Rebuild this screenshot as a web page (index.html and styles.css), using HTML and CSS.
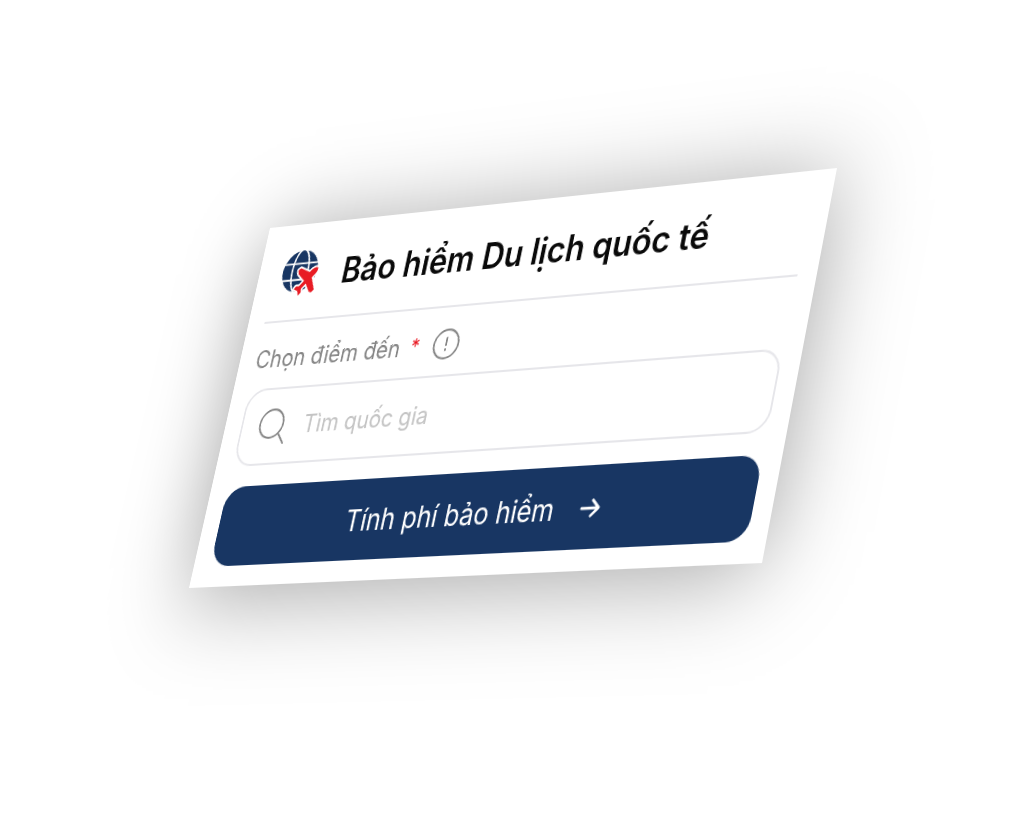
FILE: index.html
```
<!DOCTYPE html>
<html lang="vi">
  <head>
    <meta charset="UTF-8" />
    <meta name="viewport" content="width=device-width, initial-scale=1.0" />
    <title>Bảo hiểm Du lịch quốc tế</title>
    <link rel="stylesheet" href="styles.css">
  </head>
  <body>
    <form class="card">
      <header class="card-header">
        <svg class="globe" viewBox="0 0 48 48" aria-hidden="true">
          <circle cx="23" cy="23" r="22" fill="#183663" />
          <g stroke="#fff" stroke-width="2">
            <path d="M1 15h44M1 32h44" />
            <ellipse cx="23" cy="23" rx="10" ry="23" />
          </g>
          <path class="plane" d="M36 25C40 20 45 19 46 22c0 3-3 6-6 9l6 13-3 3-3-1-6-9-5 5 1 4-3 3-2-5-5-2 2-3h4l5-5-9-8-1-4 3-2z" />
        </svg>
        <h1>Bảo hiểm Du lịch quốc tế</h1>
      </header>

      <div class="label-row">
        <label for="quocGia">Chọn điểm đến</label>
        <span class="required">*</span>
        <button type="button" class="info" aria-label="Thông tin">
          <svg viewBox="0 0 30 30">
            <circle cx="15" cy="15" r="14" />
            <path d="M15 9v7M15 20v1" />
          </svg>
        </button>
      </div>

      <div class="search">
        <svg viewBox="0 0 36 36" aria-hidden="true">
          <circle cx="15" cy="15" r="14" />
          <path d="M26 26l7 9" />
        </svg>
        <input type="text" id="quocGia" placeholder="Tìm quốc gia" />
      </div>

      <button type="submit" class="submit">
        Tính phí bảo hiểm
        <svg viewBox="0 0 24 24" aria-hidden="true">
          <path d="M2 12h20M14 4l8 8-8 8" />
        </svg>
      </button>
    </form>
  </body>
</html>
```

FILE: styles.css
```
* {
  box-sizing: border-box;
}
body {
  margin: 0;
  min-height: 100vh;
  display: flex;
  align-items: center;
  justify-content: center;
  background: #fff;
  font-family: Inter, "Noto Sans", sans-serif;
  overflow: hidden;
}
svg {
  display: block;
  flex: none;
  fill: none;
  stroke-linecap: round;
  stroke-linejoin: round;
  overflow: visible;
}
.card {
  width: 100%;
  max-width: 640px;
  padding: 0 20px 20px;
  background: #fff;
  box-shadow: 0 8px 88px rgba(0, 0, 0, 0.36);
  /* tilt of the whole card */
  transform-origin: 0 0;
  transform: matrix3d(
    0.79494, -0.08447, 0, -0.00014066,
    -0.22494, 0.97811, 0, -0.0000618,
    0, 0, 1, 0,
    80, -6, 0, 1
  );
}
.card-header {
  display: flex;
  align-items: center;
  gap: 28px;
  height: 99px;
  padding-left: 8px;
  border-bottom: 2px solid #e6e6ea;
}
.globe {
  width: 46px;
  height: 46px;
}
.plane {
  fill: #e81c24;
  stroke: #fff;
  stroke-width: 4;
  paint-order: stroke;
}
h1 {
  margin: 0;
  padding-top: 4px;
  font-size: 35px;
  line-height: 40px;
  font-weight: 600;
  color: #0a0a0a;
  white-space: nowrap;
}
.label-row {
  display: flex;
  align-items: center;
  height: 66px;
  padding-top: 6px;
  font-size: 24px;
  color: #868686;
}
.required {
  margin: 0 16px 0 12px;
  font-size: 20px;
  color: #e8121c;
}
.info {
  padding: 0;
  border: 0;
  background: none;
  cursor: pointer;
}
.info svg {
  width: 30px;
  height: 30px;
  stroke: #868686;
  stroke-width: 2;
}
.search {
  display: flex;
  align-items: center;
  gap: 18px;
  height: 77px;
  padding: 0 20px;
  border: 2px solid #e6e6ea;
  border-radius: 22px;
}
.search svg {
  width: 36px;
  height: 36px;
  stroke: #868686;
  stroke-width: 2;
}
.search input {
  flex: 1;
  min-width: 0;
  padding: 0;
  border: 0;
  outline: 0;
  background: none;
  font: inherit;
  font-size: 24px;
}
.search input::placeholder {
  color: #c4c4c4;
}
.submit {
  display: flex;
  align-items: center;
  justify-content: center;
  gap: 28px;
  width: 100%;
  height: 78px;
  margin-top: 20px;
  padding: 2px 10px 0 0;
  border: 0;
  border-radius: 22px;
  background: #183663;
  color: #fff;
  font: inherit;
  font-size: 28px;
  cursor: pointer;
}
.submit svg {
  width: 22px;
  height: 22px;
  stroke: #fff;
  stroke-width: 3;
}
```
